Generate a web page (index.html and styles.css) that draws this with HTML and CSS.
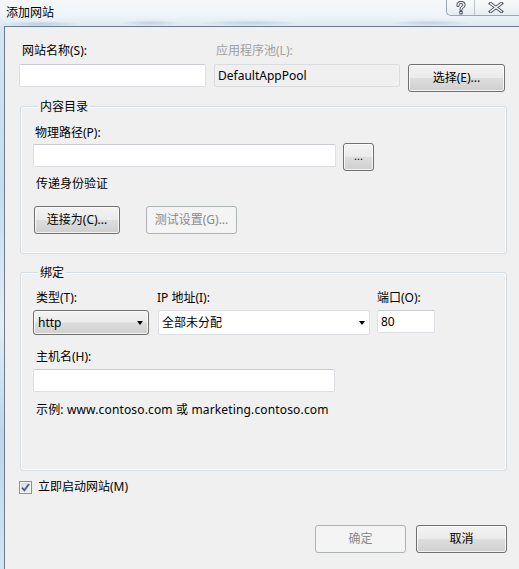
FILE: index.html
```html
<!DOCTYPE html>
<html lang="zh-CN">
<head>
<meta charset="utf-8">
<title>添加网站</title>
<link rel="stylesheet" href="styles.css">
</head>
<body>
<div class="window">
  <div class="titlebar">
    <span class="title">添加网站</span>
    <div class="caption-btns">
      <span class="cap-btn help">
        <svg width="10" height="14" viewBox="0 0 10 14">
          <path d="M2 4.5 Q2 1.5 5 1.5 Q8 1.5 8 4 Q8 5.6 6.2 6.4 Q5 7 5 8.6" fill="none" stroke="#4b5563" stroke-width="3.2" stroke-linecap="round"/>
          <path d="M2 4.5 Q2 1.5 5 1.5 Q8 1.5 8 4 Q8 5.6 6.2 6.4 Q5 7 5 8.6" fill="none" stroke="#ffffff" stroke-width="1.2" stroke-linecap="round"/>
          <rect x="3.3" y="10" width="3.4" height="3.4" fill="#4b5563"/>
          <rect x="4.3" y="11" width="1.4" height="1.4" fill="#ffffff"/>
        </svg>
      </span>
      <span class="cap-btn close">
        <svg width="16" height="11" viewBox="0 0 16 11">
          <path d="M2.5 1.5 L13.5 9.5 M13.5 1.5 L2.5 9.5" fill="none" stroke="#4b5563" stroke-width="3.4" stroke-linecap="square"/>
          <path d="M2.5 1.5 L13.5 9.5 M13.5 1.5 L2.5 9.5" fill="none" stroke="#ffffff" stroke-width="1.3" stroke-linecap="square"/>
        </svg>
      </span>
    </div>
  </div>
  <div class="frame">
    <div class="glass-edge"></div>
    <div class="client">
      <div class="top-row">
        <div class="field site-name">
          <div class="label">网站名称(S):</div>
          <div class="textbox"></div>
        </div>
        <div class="field app-pool">
          <div class="label disabled">应用程序池(L):</div>
          <div class="textbox readonly">DefaultAppPool</div>
        </div>
        <div class="field choose">
          <div class="label"></div>
          <div class="button btn-choose">选择(E)...</div>
        </div>
      </div>

      <div class="group group-content">
        <div class="legend">内容目录</div>
        <div class="label path-label">物理路径(P):</div>
        <div class="path-row">
          <div class="textbox path-box"></div>
          <div class="button btn-browse">...</div>
        </div>
        <div class="label auth-label">传递身份验证</div>
        <div class="auth-row">
          <div class="button btn-connect">连接为(C)...</div>
          <div class="button disabled-btn btn-test">测试设置(G)...</div>
        </div>
      </div>

      <div class="group group-binding">
        <div class="legend">绑定</div>
        <div class="binding-row">
          <div class="bcol col-type">
            <div class="label type-label">类型(T):</div>
            <div class="combo combo-button">
              <span class="combo-text">http</span>
              <span class="arrow"></span>
            </div>
          </div>
          <div class="bcol col-ip">
            <div class="label ip-label">IP 地址(I):</div>
            <div class="combo combo-edit">
              <span class="combo-text">全部未分配</span>
              <span class="arrow"></span>
            </div>
          </div>
          <div class="bcol col-port">
            <div class="label port-label">端口(O):</div>
            <div class="textbox port-box">80</div>
          </div>
        </div>
        <div class="label host-label">主机名(H):</div>
        <div class="textbox host-box"></div>
        <div class="label example">示例: www.contoso.com 或 marketing.contoso.com</div>
      </div>

      <div class="check-row">
        <span class="checkbox">
          <svg width="9" height="9" viewBox="0 0 9 9">
            <path d="M1 4.6 L3.4 7.4 L8 1" fill="none" stroke="#4a5d92" stroke-width="1.8"/>
          </svg>
        </span>
        <span class="check-label">立即启动网站(M)</span>
      </div>

      <div class="dialog-buttons">
        <div class="button disabled-btn btn-ok">确定</div>
        <div class="button btn-cancel">取消</div>
      </div>
    </div>
  </div>
</div>
</body>
</html>
```

FILE: styles.css
```css
* { box-sizing: border-box; }

html, body {
  margin: 0;
  padding: 0;
}

body {
  width: 519px;
  height: 569px;
  overflow: hidden;
  font-family: "Noto Sans", "Noto Sans CJK SC", sans-serif;
  font-size: 12px;
  color: #000;
  background: #dbe8f3;
}

.window {
  display: flex;
  flex-direction: column;
  width: 519px;
  height: 569px;
}

/* ---------- title bar (glass) ---------- */
.titlebar {
  height: 26px;
  display: flex;
  align-items: flex-start;
  background:
    radial-gradient(ellipse 40px 3px at 40px 24px, rgba(150,185,215,0.55), transparent),
    radial-gradient(ellipse 30px 3px at 150px 23px, rgba(150,185,215,0.5), transparent),
    radial-gradient(ellipse 50px 3px at 250px 23px, rgba(150,185,215,0.5), transparent),
    radial-gradient(ellipse 40px 3px at 430px 23px, rgba(150,185,215,0.5), transparent),
    linear-gradient(180deg, #f4f8fb 0%, #eef4f9 60%, #dde9f3 100%);
}

.title {
  margin: 4px 0 0 6px;
  line-height: 16px;
  font-family: "Noto Sans CJK SC", sans-serif;
  color: #000;
}

.caption-btns {
  margin-left: auto;
  display: flex;
  height: 16px;
  border: 1px solid #9aa6b2;
  border-top: none;
  border-right: none;
  border-bottom-left-radius: 5px;
  background: linear-gradient(180deg, #f8fafc 0%, #f0f4f7 50%, #e6ecf1 100%);
  overflow: hidden;
}

.cap-btn {
  display: flex;
  align-items: center;
  justify-content: center;
}

.cap-btn.help {
  width: 28px;
  border-right: 1px solid #bcc5ce;
}

.cap-btn.close {
  width: 44px;
  padding-right: 2px;
}

/* ---------- frame ---------- */
.frame {
  flex: 1;
  display: flex;
}

.glass-edge {
  width: 4px;
  background: linear-gradient(180deg, #d6e5f1 0%, #c6dbec 30%, #e2edf6 55%, #bed5e9 75%, #d4e4f1 100%);
}

.client {
  flex: 1;
  background: #f0f0f0;
  border-left: 1px solid #6d7b89;
  border-top: 1px solid #6d7b89;
  padding: 16px 12px 0 14px;
  display: flex;
  flex-direction: column;
}

/* ---------- common controls ---------- */
.label {
  line-height: 16px;
  height: 16px;
  white-space: nowrap;
}

.label.disabled { color: #a0a0a0; }

.textbox {
  height: 23px;
  background: #fff;
  border: 1px solid #dcdfe3;
  border-top-color: #c9cdd2;
  border-radius: 2px;
  line-height: 21px;
  padding-left: 3px;
  white-space: nowrap;
}

.textbox.readonly {
  background: #f0f0f0;
  border-color: #dadcdf;
}

.button {
  height: 28px;
  border: 1px solid #707070;
  border-radius: 3px;
  background: linear-gradient(180deg, #f3f3f3 0%, #ebebeb 48%, #dddddd 52%, #cfcfcf 100%);
  box-shadow: inset 0 0 0 1px rgba(255,255,255,0.75);
  display: flex;
  align-items: center;
  justify-content: center;
  line-height: 16px;
  white-space: nowrap;
}

.button.disabled-btn {
  border-color: #adb2b5;
  background: #f4f4f4;
  box-shadow: none;
  color: #8a8a8a;
}

/* ---------- top row ---------- */
.top-row {
  display: flex;
}

.field .label { margin-bottom: 5px; }

.site-name { width: 187px; }
.site-name .label { padding-left: 3px; }

.app-pool {
  width: 186px;
  margin-left: 8px;
}
.app-pool .label { padding-left: 2px; }

.choose { margin-left: 8px; }
.btn-choose { width: 97px; }

/* ---------- group boxes ---------- */
.group {
  margin-left: 1px;
  border: 1px solid #d5dfe5;
  border-radius: 3px;
  box-shadow: inset 0 0 0 1px #fbfcfd;
  padding: 0 12px;
  display: flex;
  flex-direction: column;
  align-items: flex-start;
}

.legend {
  margin: -8px 0 0 5px;
  padding: 0 2px;
  line-height: 16px;
  background: #f0f0f0;
}

.group-content {
  margin-top: 14px;
  height: 148px;
}

.path-label {
  margin-top: 10px;
  padding-left: 2px;
}

.path-row {
  margin-top: 2px;
  display: flex;
  align-items: flex-start;
}

.path-box {
  width: 303px;
  margin-top: 1px;
}

.btn-browse {
  width: 31px;
  margin-left: 7px;
  font-size: 11px;
  padding-bottom: 2px;
}

.auth-label {
  margin-top: 5px;
  padding-left: 3px;
}

.auth-row {
  margin-top: 14px;
  display: flex;
}

.btn-connect {
  width: 86px;
  margin-left: 1px;
}

.btn-test {
  width: 91px;
  margin-left: 26px;
}

.group-binding {
  margin-top: 18px;
  height: 199px;
}

.binding-row {
  margin-top: 9px;
  display: flex;
}

.bcol .label { margin-bottom: 4px; }

.col-type { width: 116px; }
.type-label { padding-left: 3px; }

.col-ip {
  width: 212px;
  margin-left: 9px;
}
.ip-label { margin-left: -1px; }

.col-port {
  width: 58px;
  margin-left: 7px;
}

.combo {
  height: 25px;
  display: flex;
  align-items: center;
  padding: 0 5px 0 4px;
}

.combo-text {
  flex: 1;
  line-height: 16px;
}

.combo-button {
  border: 1px solid #707070;
  border-radius: 3px;
  background: linear-gradient(180deg, #f3f3f3 0%, #ebebeb 48%, #dddddd 52%, #cfcfcf 100%);
  box-shadow: inset 0 0 0 1px rgba(255,255,255,0.75);
}

.combo-edit {
  background: #fff;
  border: 1px solid #dcdfe3;
  border-radius: 2px;
  padding-left: 3px;
  padding-right: 4px;
}

.arrow {
  width: 0;
  height: 0;
  border-left: 3.5px solid transparent;
  border-right: 3.5px solid transparent;
  border-top: 4px solid #000;
  margin-top: 1px;
}

.port-box {
  width: 58px;
}

.host-label {
  margin-top: 14px;
  padding-left: 3px;
}

.host-box {
  margin-top: 4px;
  width: 302px;
}

.example {
  margin-top: 10px;
  padding-left: 3px;
  letter-spacing: 0.15px;
}

/* ---------- checkbox ---------- */
.check-row {
  margin-top: 8px;
  display: flex;
  align-items: center;
  height: 16px;
}

.checkbox {
  width: 13px;
  height: 13px;
  border: 1px solid #8f8f8f;
  background: linear-gradient(135deg, #d9dde3 0%, #eef0f3 100%);
  box-shadow: inset 0 0 0 1px #f4f4f4;
  display: flex;
  align-items: center;
  justify-content: center;
}

.check-label {
  margin-left: 6px;
  line-height: 16px;
}

/* ---------- dialog buttons ---------- */
.dialog-buttons {
  margin-top: 30px;
  display: flex;
  justify-content: flex-end;
  gap: 10px;
}

.btn-ok, .btn-cancel {
  width: 91px;
}
```
